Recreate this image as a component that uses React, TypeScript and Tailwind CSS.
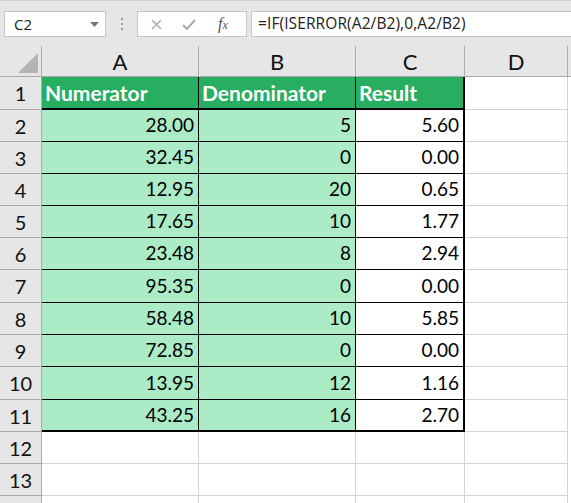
import React from 'react';

const rows: [string, string, string][] = [
  ['28.00', '5', '5.60'],
  ['32.45', '0', '0.00'],
  ['12.95', '20', '0.65'],
  ['17.65', '10', '1.77'],
  ['23.48', '8', '2.94'],
  ['95.35', '0', '0.00'],
  ['58.48', '10', '5.85'],
  ['72.85', '0', '0.00'],
  ['13.95', '12', '1.16'],
  ['43.25', '16', '2.70'],
];

const cellFont = "font-['Lato',sans-serif]";

function RowHeader({ n }: { n?: number }) {
  return (
    <div className="flex w-[42px] shrink-0 items-center justify-center border-r border-b border-[#ababab] bg-[#e6e6e6] text-[20px] text-[#111]">
      {n}
    </div>
  );
}

function FormulaBar() {
  return (
    <div className="flex h-[46px] items-start border-t border-[#d0d0d0] bg-[#e6e6e6] pt-[10px] font-['Open_Sans',sans-serif]">
      <div className="ml-[4px] flex h-[26px] w-[102px] items-center justify-between border border-[#c6c6c6] bg-white pl-[9px] pr-[6px] text-[15px] text-[#222]">
        <span>C2</span>
        <svg width="9" height="5" viewBox="0 0 9 5">
          <path d="M0 0h9L4.5 5z" fill="#777" />
        </svg>
      </div>
      <div className="ml-[15px] mr-[14px] flex h-[26px] flex-col items-center justify-center gap-[3px]">
        <span className="h-[2px] w-[2px] bg-[#999]" />
        <span className="h-[2px] w-[2px] bg-[#999]" />
        <span className="h-[2px] w-[2px] bg-[#999]" />
      </div>
      <div className="flex h-[26px] w-[110px] items-center border border-[#c6c6c6] bg-white">
        <svg className="ml-[13px]" width="11" height="11" viewBox="0 0 11 11">
          <path d="M1 1l9 9M10 1l-9 9" stroke="#aaa" strokeWidth="1.4" />
        </svg>
        <svg className="ml-[20px]" width="14" height="11" viewBox="0 0 14 11">
          <path d="M1 6l4 4 8-9" stroke="#aaa" strokeWidth="2" fill="none" />
        </svg>
        <span className="ml-[22px] font-['Liberation_Serif',serif] text-[16px] italic text-[#555]">
          f<span className="text-[12px]">x</span>
        </span>
      </div>
      <div className="ml-[4px] flex h-[26px] flex-1 items-center border border-r-0 border-[#c6c6c6] bg-white pl-[6px] text-[15.5px] tracking-[0.1px] text-[#222]">
        =IF(ISERROR(A2/B2),0,A2/B2)
      </div>
    </div>
  );
}

export default function App() {
  return (
    <div className={`h-[503px] w-[571px] overflow-hidden bg-white ${cellFont}`}>
      <FormulaBar />
      {/* column headers */}
      <div className="flex h-[31px] bg-[#e6e6e6] text-[22px] text-[#111]">
        <div className="relative w-[42px] shrink-0 border-r border-b border-[#ababab]">
          <svg className="absolute right-[3px] bottom-[3px]" width="20" height="20" viewBox="0 0 20 20">
            <path d="M20 0V20H0z" fill="#b4b4b4" />
          </svg>
        </div>
        <div className="flex w-[157px] shrink-0 items-center justify-center border-r border-b border-[#ababab]">A</div>
        <div className="flex w-[157px] shrink-0 items-center justify-center border-r border-b border-[#ababab]">B</div>
        <div className="flex w-[109px] shrink-0 items-center justify-center border-r border-b border-[#ababab]">C</div>
        <div className="flex w-[103px] shrink-0 items-center justify-center border-r border-b border-[#ababab]">D</div>
        <div className="flex-1 border-b border-[#ababab]" />
      </div>
      {/* row 1 */}
      <div className="flex h-[33px]">
        <RowHeader n={1} />
        <div className="flex w-[157px] shrink-0 items-center border-r border-b-2 border-black bg-[#27ae60] pl-[3px] text-[21px] font-bold text-white">
          Numerator
        </div>
        <div className="flex w-[157px] shrink-0 items-center border-r border-b-2 border-black bg-[#27ae60] pl-[3px] text-[21px] font-bold text-white">
          Denominator
        </div>
        <div className="flex w-[109px] shrink-0 items-center border-r-2 border-b-2 border-black bg-[#27ae60] pl-[3px] text-[21px] font-bold text-white">
          Result
        </div>
        <div className="w-[103px] shrink-0 border-r border-b border-[#d4d4d4]" />
      </div>
      {rows.map(([a, b, c], i) => {
        const last = i === rows.length - 1;
        const tall = i === 5 || i === 8;
        return (
          <div key={i} className={`flex ${tall ? 'h-[33px]' : 'h-[32px]'}`}>
            <RowHeader n={i + 2} />
            <div
              className={`flex w-[157px] shrink-0 items-center justify-end border-r border-black bg-[#abebc6] pr-[4px] text-[19px] text-black ${last ? 'border-b-2' : 'border-b'}`}
            >
              {a}
            </div>
            <div
              className={`flex w-[157px] shrink-0 items-center justify-end border-r border-black bg-[#abebc6] pr-[4px] text-[19px] text-black ${last ? 'border-b-2' : 'border-b'}`}
            >
              {b}
            </div>
            <div
              className={`flex w-[109px] shrink-0 items-center justify-end border-r-2 border-black bg-white pr-[4px] text-[19px] text-black ${last ? 'border-b-2' : 'border-b'}`}
            >
              {c}
            </div>
            <div className="w-[103px] shrink-0 border-r border-b border-[#d4d4d4]" />
          </div>
        );
      })}
      {[12, 13, undefined].map((n, i) => (
        <div key={i} className="flex h-[32px]">
          <RowHeader n={n} />
          <div className="w-[157px] shrink-0 border-r border-b border-[#d4d4d4]" />
          <div className="w-[157px] shrink-0 border-r border-b border-[#d4d4d4]" />
          <div className="w-[109px] shrink-0 border-r border-b border-[#d4d4d4]" />
          <div className="w-[103px] shrink-0 border-r border-b border-[#d4d4d4]" />
        </div>
      ))}
    </div>
  );
}
